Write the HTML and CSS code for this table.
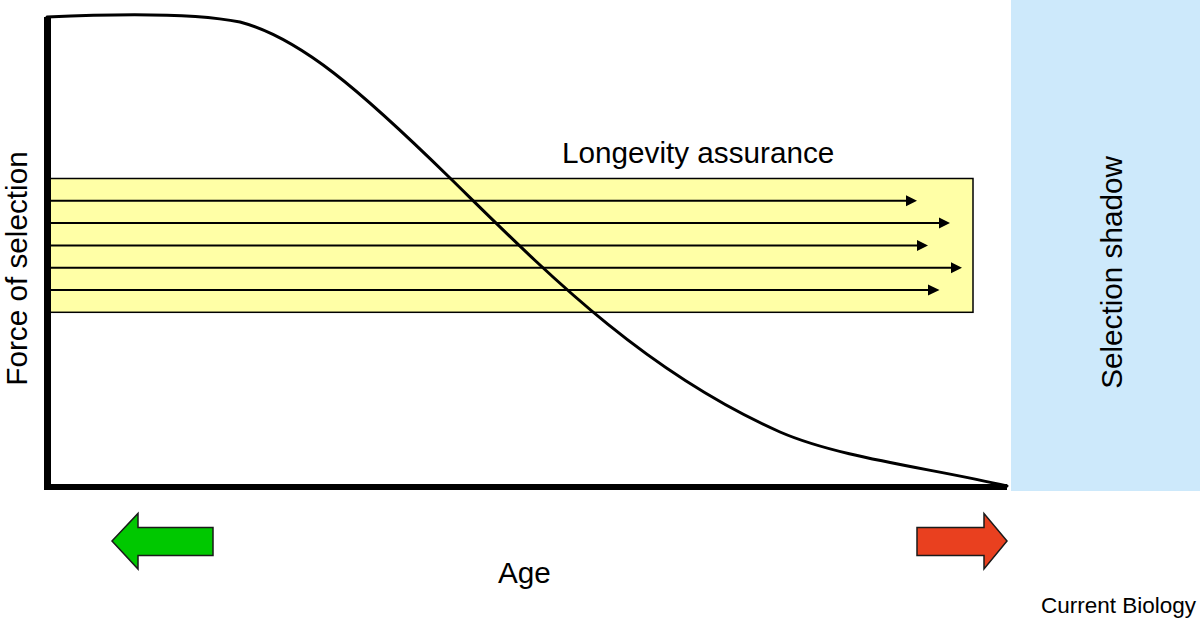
FILE: index.html
```html
<!DOCTYPE html>
<html lang="en">
<head>
<meta charset="utf-8">
<title>Force of selection vs Age</title>
<link rel="stylesheet" href="styles.css">
</head>
<body>
<figure class="figure">
  <svg class="chart" viewBox="0 0 1200 618" width="1200" height="618" xmlns="http://www.w3.org/2000/svg">
    <rect class="shadow-zone" x="1011" y="0" width="189" height="491"/>
    <rect class="assurance" x="48" y="178.5" width="925" height="133.8"/>
    <g class="arrows">
      <line x1="48" y1="200.8" x2="907" y2="200.8"/>
      <polygon points="906,195.3 917,200.8 906,206.3"/>
      <line x1="48" y1="223.1" x2="940" y2="223.1"/>
      <polygon points="939,217.6 950,223.1 939,228.6"/>
      <line x1="48" y1="245.4" x2="918" y2="245.4"/>
      <polygon points="917,239.9 928,245.4 917,250.9"/>
      <line x1="48" y1="267.7" x2="952" y2="267.7"/>
      <polygon points="951,262.2 962,267.7 951,273.2"/>
      <line x1="48" y1="290" x2="929" y2="290"/>
      <polygon points="928,284.5 939.5,290 928,295.5"/>
    </g>
    <path class="curve" d="M47 17 C110 14 190 12 240 22 C300 38 360 90 450 178 C540 266 640 370 780 432 C840 458 930 468 1007 486"/>
    <rect class="axis" x="44" y="17" width="7" height="473"/>
    <rect class="axis" x="44" y="484" width="963" height="6"/>
    <polygon class="arrow-young" points="112,541 138,513.5 138,527.5 213,527.5 213,555.5 138,555.5 138,569"/>
    <polygon class="arrow-old" points="917,527.5 984,527.5 984,513.5 1007,541 984,569 984,555.5 917,555.5"/>
    <text class="label" x="562" y="163.3">Longevity assurance</text>
    <text class="label label-mid" transform="translate(26.5 268.5) rotate(-90)">Force of selection</text>
    <text class="label label-mid" transform="translate(1121.5 272.5) rotate(-90)">Selection shadow</text>
    <text class="label" x="498" y="583.3">Age</text>
    <text class="credit" x="1041" y="613.3">Current Biology</text>
  </svg>
</figure>
</body>
</html>
```

FILE: styles.css
```css
html, body {
  margin: 0;
  padding: 0;
  background: #ffffff;
}

.figure {
  margin: 0;
  width: 1200px;
  height: 618px;
  overflow: hidden;
}

.chart {
  display: block;
}

.shadow-zone {
  fill: #cde9fb;
}

.assurance {
  fill: #ffffa6;
  stroke: #000000;
  stroke-width: 1.5;
}

.arrows line {
  stroke: #000000;
  stroke-width: 2;
}

.arrows polygon {
  fill: #000000;
}

.curve {
  fill: none;
  stroke: #000000;
  stroke-width: 3;
  stroke-linecap: round;
}

.axis {
  fill: #000000;
}

.arrow-young {
  fill: #00c800;
  stroke: #1a1a1a;
  stroke-width: 1.5;
  stroke-linejoin: miter;
}

.arrow-old {
  fill: #e9401f;
  stroke: #1a1a1a;
  stroke-width: 1.5;
  stroke-linejoin: miter;
}

.label {
  font-family: "Liberation Sans", Arial, sans-serif;
  font-size: 29.7px;
  fill: #000000;
}

.label-mid {
  text-anchor: middle;
}

.credit {
  font-family: "Liberation Sans", Arial, sans-serif;
  font-size: 22.5px;
  fill: #000000;
}
```
